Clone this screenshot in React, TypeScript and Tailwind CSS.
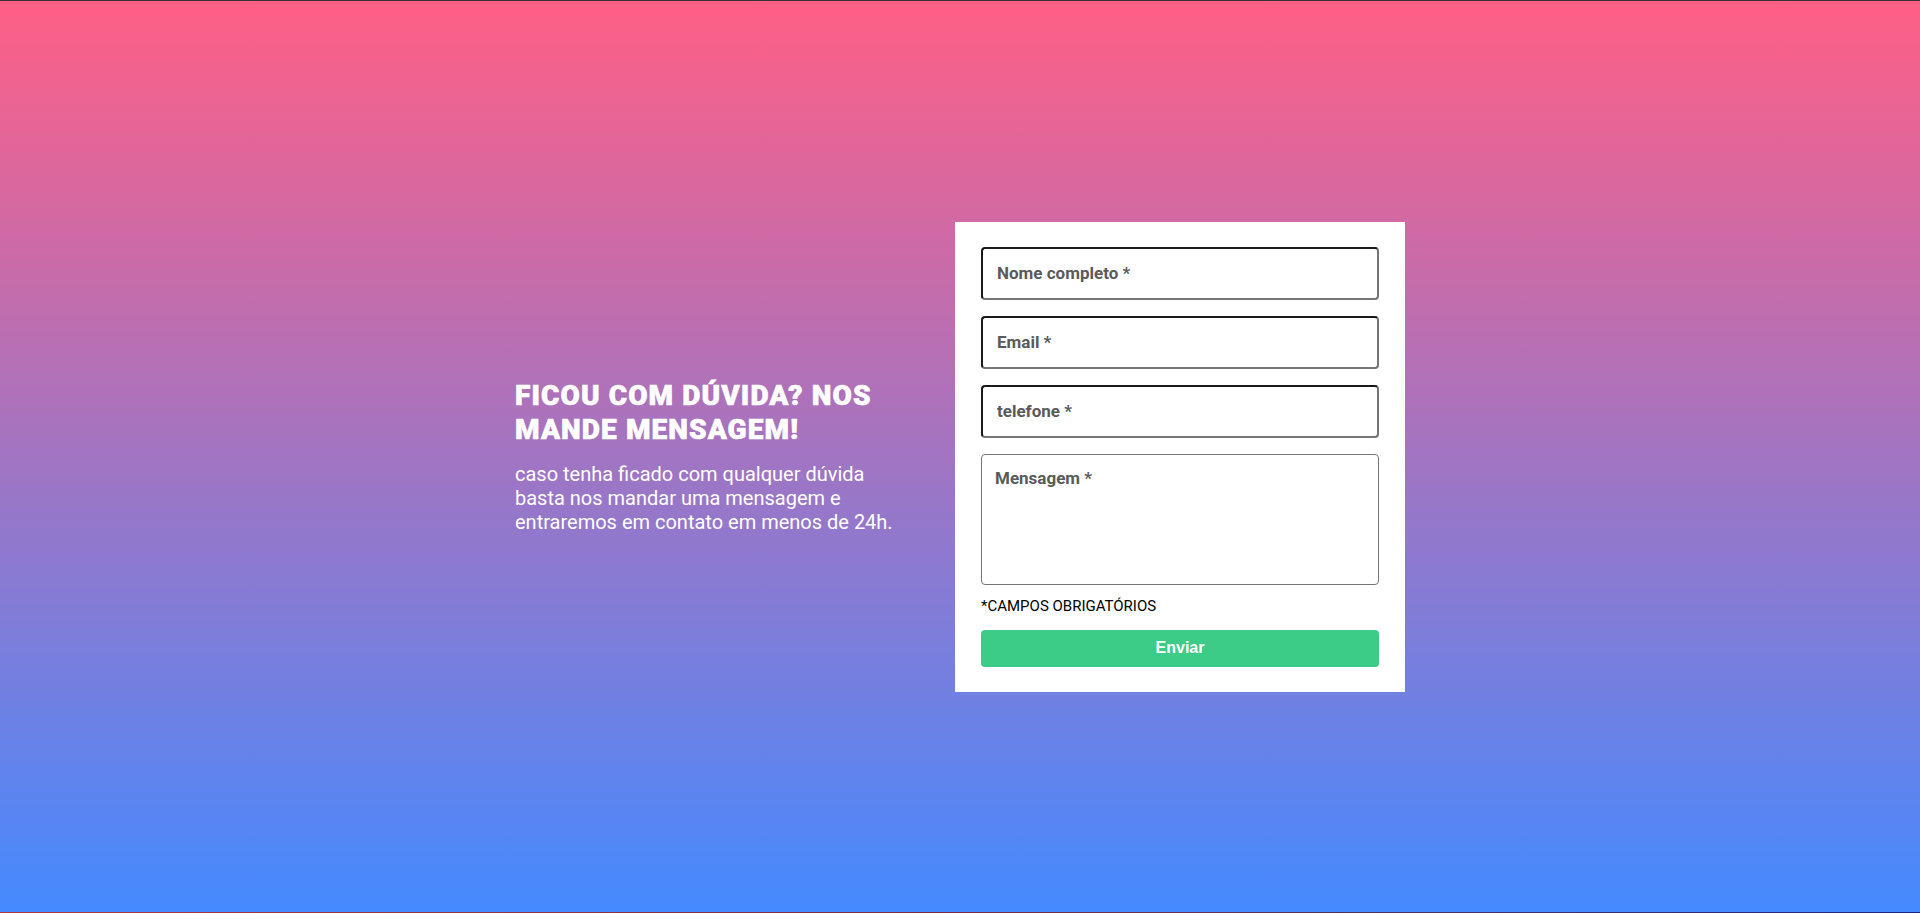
import React from "react";

const fields = ["Nome completo *", "Email *", "telefone *"];

export default function App() {
  return (
    <div className="w-full bg-[#333333] pt-px" style={{ fontFamily: "Roboto, 'Liberation Sans', sans-serif" }}>
      <section className="h-[911px] w-full bg-linear-to-b/srgb from-[#ff5f85] to-[#448aff] flex items-center justify-center">
        <div className="flex items-center gap-10">
          {/* Left text */}
          <div className="w-[400px] text-white">
            <h2 className="text-[28px] leading-[34px] font-black uppercase tracking-[1.1px] [-webkit-text-stroke:0.6px_white]">
              Ficou com dúvida? Nos mande mensagem!
            </h2>
            <p className="mt-[15px] text-[20px] leading-6 pr-[12px]">
              caso tenha ficado com qualquer dúvida basta nos mandar uma mensagem e entraremos em contato em menos de 24h.
            </p>
          </div>

          {/* Form card */}
          <form className="w-[450px] bg-white px-[26px] py-[25px] flex flex-col" onSubmit={(e) => e.preventDefault()}>
            <div className="flex flex-col gap-4">
              {fields.map((f) => (
                <input
                  key={f}
                  placeholder={f}
                  className="h-[53px] w-full rounded-[4px] border-2 border-t-[#1a1a1a] border-l-[#1a1a1a] border-b-[#767676] border-r-[#767676] px-[14px] text-[17px] font-bold placeholder:text-[#5a5a5a] outline-none"
                />
              ))}
              <textarea
                placeholder="Mensagem *"
                className="h-[131px] w-full resize-none rounded-[4px] border border-[#767676] px-[13px] py-[11px] text-[17px] font-bold placeholder:text-[#5a5a5a] outline-none"
              />
            </div>
            <p className="mt-[11px] text-[15px] leading-5 text-black uppercase">*Campos obrigatórios</p>
            <button
              type="submit"
              className="mt-[14px] h-[37px] w-full rounded-[4px] bg-[#3ccc88] text-white text-[16px] font-bold"
              style={{ fontFamily: "'Liberation Sans', Arial, sans-serif" }}
            >
              Enviar
            </button>
          </form>
        </div>
      </section>
      <div className="h-px w-full bg-gradient-to-r from-[#b03a3a] via-[#7a2a40] to-[#1a237e]" />
    </div>
  );
}
